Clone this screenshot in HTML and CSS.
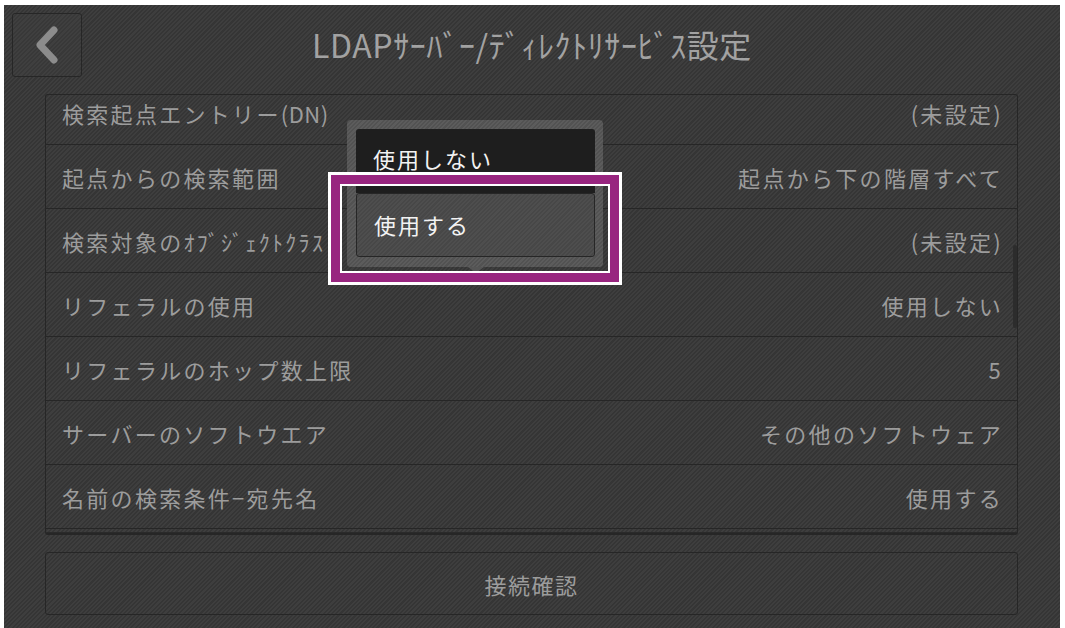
FILE: index.html
```html
<!DOCTYPE html>
<html>
<head>
    <title>LDAPサーバー/ディレクトリサービス設定</title>
    <link rel="stylesheet" href="styles.css">
</head>
<body>
    <div class="screen">
        <div class="header">
            <button class="back-button">
                <svg width="30" height="40" viewBox="0 0 30 40">
                    <polyline points="22,5 8,20 22,35" fill="none" stroke="#8c8c8c" stroke-width="7" stroke-linecap="round" stroke-linejoin="round"/>
                </svg>
            </button>
            <h1 class="title">LDAPｻｰﾊﾞｰ/ﾃﾞｨﾚｸﾄﾘｻｰﾋﾞｽ設定</h1>
            <div class="spacer"></div>
        </div>

        <div class="setting-list">
            <div class="row first"><span>検索起点エントリー<span class="latin">(DN)</span></span><span>(未設定)</span></div>
            <div class="row"><span>起点からの検索範囲</span><span>起点から下の階層すべて</span></div>
            <div class="row"><span>検索対象のｵﾌﾞｼﾞｪｸﾄｸﾗｽ</span><span>(未設定)</span></div>
            <div class="row"><span>リフェラルの使用</span><span>使用しない</span></div>
            <div class="row"><span>リフェラルのホップ数上限</span><span>5</span></div>
            <div class="row"><span>サーバーのソフトウエア</span><span>その他のソフトウェア</span></div>
            <div class="row"><span>名前の検索条件−宛先名</span><span>使用する</span></div>
            <div class="scrollbar"></div>
        </div>

        <button class="wide-button">接続確認</button>

        <!-- dropdown for リフェラルの使用 -->
        <div class="popup">
            <div class="popup-item dark">使用しない</div>
            <div class="popup-item selected">使用する</div>
            <div class="popup-arrow"></div>
        </div>
        <div class="highlight"></div>
    </div>
</body>
</html>
```

FILE: styles.css
```css
/* Panel screen */
html, body {
    margin: 0;
    height: 100%;
}

body {
    background-color: #fff;
    padding: 5px 5px 0 4px;
    box-sizing: border-box;
    font-family: "Noto Sans CJK JP", "Noto Sans", sans-serif;
    overflow: hidden;
}

.screen {
    position: relative;
    height: 100%;
    background: repeating-linear-gradient(135deg, #3e3e3e 0, #3e3e3e 1.5px, #353535 1.5px, #353535 3px);
    padding: 0 42px 0 41px;
    box-sizing: border-box;
}

.header {
    display: grid;
    grid-template-columns: 70px 1fr 70px;
    align-items: start;
    height: 89px;
    margin: 0 -34px 0 -33px;
}

.back-button {
    margin-top: 8px;
    width: 70px;
    height: 64px;
    background: repeating-linear-gradient(135deg, #3f3f3f 0, #3f3f3f 1.5px, #383838 1.5px, #383838 3px);
    border: 1px solid #262626;
    border-radius: 3px;
    display: flex;
    align-items: center;
    justify-content: center;
    padding: 0;
}

.title {
    margin: 0;
    padding-top: 16px;
    text-align: center;
    font-size: 32px;
    font-weight: normal;
    color: #a2a2a2;
    letter-spacing: 0.6px;
}

.setting-list {
    position: relative;
    height: 441px;
    box-sizing: border-box;
    border: 1px solid #262626;
    border-radius: 3px;
    border-bottom-width: 2px;
    overflow: hidden;
    box-shadow: inset 0 -4px 0 -3px #2a2a2a;
}

.row {
    display: flex;
    justify-content: space-between;
    align-items: center;
    height: 63px;
    padding: 0 16px 0 16px;
    border-bottom: 1px solid #262626;
    font-size: 22px;
    letter-spacing: 2.3px;
    color: #9c9c9c;
}

.row .latin {
    letter-spacing: 0.5px;
}

.row > span:last-child {
    margin-right: -2px;
}

.row.first {
    margin-top: -14px;
}

.scrollbar {
    position: absolute;
    left: 967px;
    top: 150px;
    width: 4px;
    height: 83px;
    background-color: #2c2c2c;
    border-radius: 2px;
}

.wide-button {
    display: block;
    width: 100%;
    height: 63px;
    margin-top: 17px;
    background: transparent;
    border: 1px solid #262626;
    border-radius: 3px;
    font-family: inherit;
    font-size: 22px;
    letter-spacing: 1.5px;
    color: #9c9c9c;
}

.popup {
    position: absolute;
    left: 343px;
    top: 115px;
    width: 256px;
    height: 147px;
    box-sizing: border-box;
    padding: 9px 8px 0 9px;
    background: repeating-linear-gradient(135deg, #5c5c5c 0, #5c5c5c 1.5px, #525252 1.5px, #525252 3px);
    border-radius: 4px;
}

.popup-item {
    height: 64px;
    box-sizing: border-box;
    padding-left: 17px;
    display: flex;
    align-items: center;
    font-size: 22px;
    letter-spacing: 2px;
    color: #f2f2f2;
    border-radius: 3px;
}

.popup-item.dark {
    background-color: #1e1e1e;
    border-radius: 3px 3px 0 0;
    padding-bottom: 6px;
}

.popup-item.selected {
    background: repeating-linear-gradient(135deg, #4e4e4e 0, #4e4e4e 1.5px, #474747 1.5px, #474747 3px);
    border: 1px solid #262626;
    padding-bottom: 2px;
}

.popup-arrow {
    position: absolute;
    left: 121px;
    bottom: -6px;
    width: 0;
    height: 0;
    border-left: 8px solid transparent;
    border-right: 8px solid transparent;
    border-top: 6px solid #555;
}

.highlight {
    position: absolute;
    left: 324px;
    top: 167px;
    width: 294px;
    height: 113px;
    box-sizing: border-box;
    border: 3px solid #fff;
    box-shadow: inset 0 0 0 9px #98257f, inset 0 0 0 11px #fff;
}
```
